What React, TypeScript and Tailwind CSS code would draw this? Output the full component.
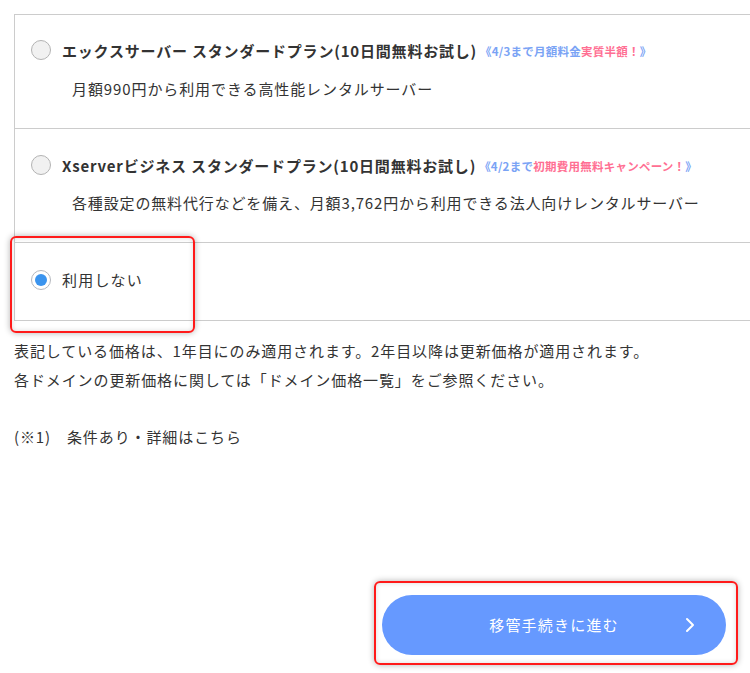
import React from "react";

const font = { fontFamily: '"Noto Sans CJK JP", "Noto Sans", sans-serif' };

function Radio({ checked }: { checked?: boolean }) {
  return checked ? (
    <span className="flex h-[20px] w-[20px] shrink-0 items-center justify-center rounded-full border border-[#b5b8be] bg-white">
      <span className="h-[12px] w-[12px] rounded-full bg-[#3b94ee]" />
    </span>
  ) : (
    <span className="h-[20px] w-[20px] shrink-0 rounded-full border border-[#b3b3b3] bg-[#f1f1f1]" />
  );
}

export default function App() {
  return (
    <div className="relative h-[673px] w-[750px] overflow-hidden bg-white text-[#333]" style={font}>
      <div className="pt-[14px]">
        <div className="ml-[14px] w-[760px] border border-b-0 border-[#cccccc]">
          {/* Row 1 */}
          <div className="border-b border-[#cccccc] pb-[27px] pl-[16px] pt-[25px]">
            <div className="flex h-[20px] items-center">
              <Radio />
              <span className="ml-[11px] mt-[3px] whitespace-nowrap text-[15px] font-bold tracking-[0.8px]">
                エックスサーバー スタンダードプラン(10日間無料お試し)
              </span>
              <span className="ml-[3px] mt-[3px] whitespace-nowrap text-[11.5px] font-bold tracking-[0.25px] text-[#7aa3f5]">
                《4/3まで月額料金<span className="text-[#ff6f93]">実質半額！</span>》
              </span>
            </div>
            <div className="ml-[41px] mt-[17px] whitespace-nowrap text-[15px] leading-[24px] tracking-[0.9px]">
              月額990円から利用できる高性能レンタルサーバー
            </div>
          </div>
          {/* Row 2 */}
          <div className="border-b border-[#cccccc] pb-[27px] pl-[16px] pt-[26px]">
            <div className="flex h-[20px] items-center">
              <Radio />
              <span className="ml-[11px] mt-[3px] whitespace-nowrap text-[15px] font-bold tracking-[0.8px]">
                Xserverビジネス スタンダードプラン(10日間無料お試し)
              </span>
              <span className="ml-[3px] mt-[3px] whitespace-nowrap text-[11.5px] font-bold tracking-[0.25px] text-[#7aa3f5]">
                《4/2まで<span className="text-[#ff6f93]">初期費用無料キャンペーン！</span>》
              </span>
            </div>
            <div className="ml-[41px] mt-[16px] whitespace-nowrap text-[15px] leading-[24px] tracking-[0.85px]">
              各種設定の無料代行などを備え、月額3,762円から利用できる法人向けレンタルサーバー
            </div>
          </div>
          {/* Row 3 */}
          <div className="border-b border-[#cccccc] pb-[30px] pl-[16px] pt-[27px]">
            <div className="flex h-[20px] items-center">
              <Radio checked />
              <span className="ml-[11px] whitespace-nowrap text-[15px] tracking-[1.2px]">利用しない</span>
            </div>
          </div>
        </div>

        <div className="mt-[16px] pl-[14px] text-[15px] leading-[28.5px] tracking-[0.9px]">
          <p className="whitespace-nowrap">
            表記している価格は、1年目にのみ適用されます。2年目以降は更新価格が適用されます。
          </p>
          <p className="whitespace-nowrap">各ドメインの更新価格に関しては「ドメイン価格一覧」をご参照ください。</p>
          <p className="h-[28.5px]" />
          <p className="whitespace-nowrap">(※1)　条件あり・詳細はこちら</p>
        </div>

        <div className="mt-[144px] flex justify-end pr-[24px]">
          <button className="relative flex h-[60px] w-[344px] items-center justify-center rounded-full bg-[#6699ff] text-[15px] tracking-[1.2px] text-white">
            移管手続きに進む
            <svg
              className="absolute right-[31px] top-1/2 -translate-y-1/2"
              width="10"
              height="16"
              viewBox="0 0 10 16"
              fill="none"
            >
              <polyline points="2,2 8,8 2,14" stroke="white" strokeWidth="2" strokeLinecap="round" strokeLinejoin="round" />
            </svg>
          </button>
        </div>
      </div>

      {/* annotation highlights */}
      <div className="pointer-events-none absolute left-[10px] top-[236px] h-[97px] w-[185px] rounded-[6px] border-2 border-[#ff1a1a] shadow-[0_0_6px_rgba(0,0,0,0.3),inset_0_0_5px_rgba(0,0,0,0.15)]" />
      <div className="pointer-events-none absolute left-[374px] top-[581px] h-[84px] w-[364px] rounded-[6px] border-2 border-[#ff1a1a] shadow-[0_0_6px_rgba(0,0,0,0.3),inset_0_0_5px_rgba(0,0,0,0.15)]" />
    </div>
  );
}
